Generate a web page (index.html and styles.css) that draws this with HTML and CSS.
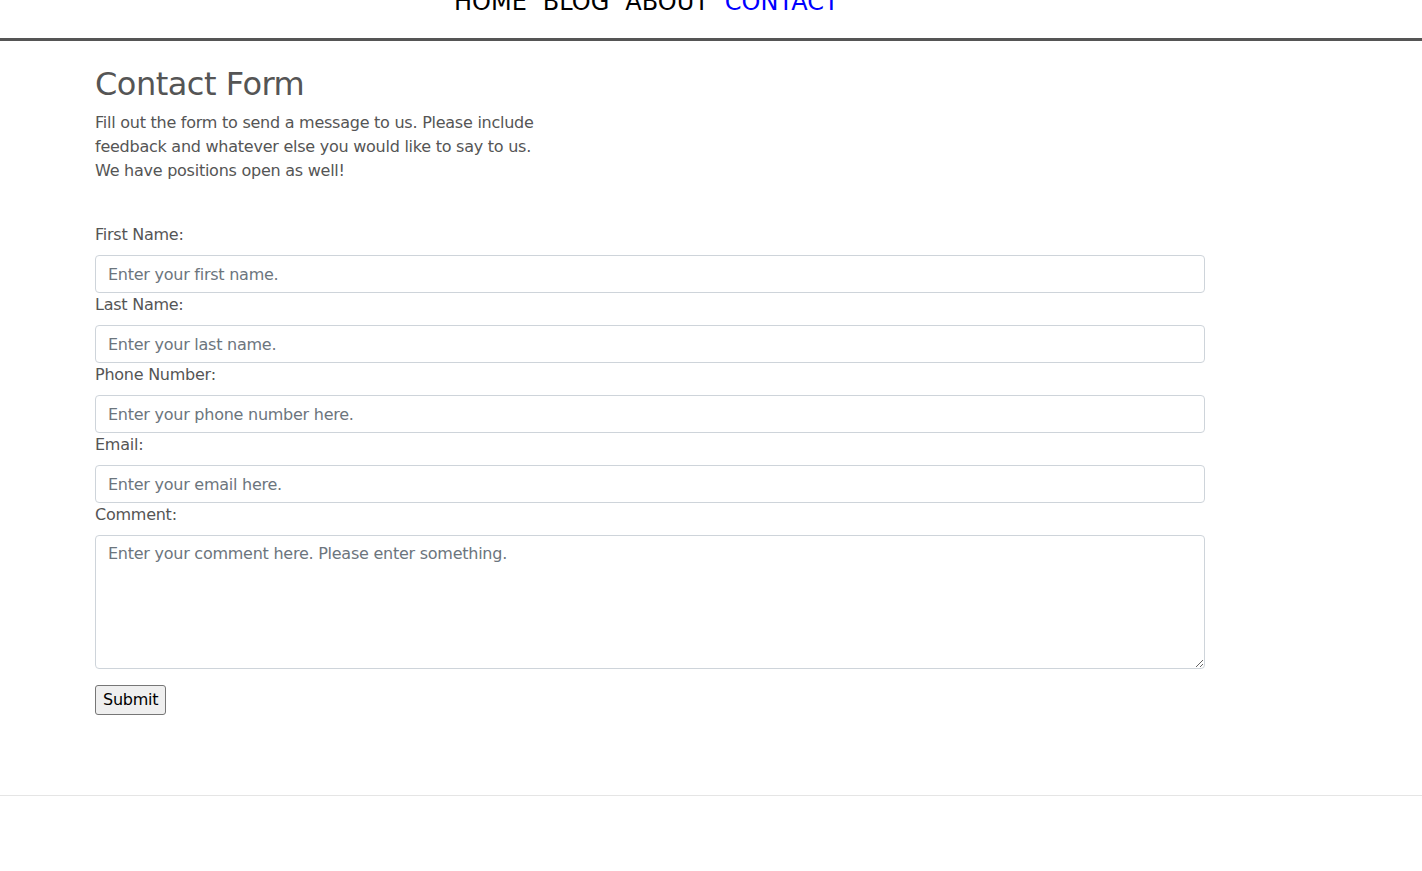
FILE: index.html
```html
<!DOCTYPE html>
<html>
<head>
<meta charset="utf-8">
<title>Contact</title>
<link rel="stylesheet" href="styles.css">
</head>
<body>
<header class="site-header">
  <nav class="nav">
    <a class="nav-link" href="#">HOME</a>
    <a class="nav-link" href="#">BLOG</a>
    <a class="nav-link" href="#">ABOUT</a>
    <a class="nav-link active" href="#">CONTACT</a>
  </nav>
</header>
<main class="content">
  <h1 class="title">Contact Form</h1>
  <p class="intro">Fill out the form to send a message to us. Please include feedback and whatever else you would like to say to us. We have positions open as well!</p>
  <form class="form">
    <label class="label" for="fn">First Name:</label>
    <input class="field" id="fn" type="text" placeholder="Enter your first name.">
    <label class="label" for="ln">Last Name:</label>
    <input class="field" id="ln" type="text" placeholder="Enter your last name.">
    <label class="label" for="ph">Phone Number:</label>
    <input class="field" id="ph" type="text" placeholder="Enter your phone number here.">
    <label class="label" for="em">Email:</label>
    <input class="field" id="em" type="text" placeholder="Enter your email here.">
    <label class="label" for="cm">Comment:</label>
    <textarea class="field area" id="cm" placeholder="Enter your comment here. Please enter something."></textarea>
    <div class="actions"><button class="submit" type="button">Submit</button></div>
  </form>
</main>
<hr class="footer-rule">
</body>
</html>
```
FILE: styles.css
```css
html, body {
  margin: 0;
  padding: 0;
  background: #fff;
}
body {
  font-family: "DejaVu Sans", sans-serif;
  color: #555;
  font-size: 16px;
  line-height: 24px;
  letter-spacing: -0.25px;
}
.site-header {
  height: 38px;
  border-bottom: 3px solid #555;
  overflow: hidden;
}
.nav {
  display: flex;
  gap: 16px;
  margin-top: -10px;
  padding-left: 454px;
  font-size: 24px;
  line-height: 24px;
  letter-spacing: 0;
}
.nav-link {
  color: #000;
  text-decoration: none;
}
.nav-link.active {
  color: #0000ff;
}
.content {
  padding-left: 95px;
  width: 1110px;
}
.title {
  margin: 24px 0 8px;
  font-size: 32px;
  line-height: 38px;
  font-weight: 400;
  letter-spacing: -0.5px;
  color: #555;
}
.intro {
  margin: 0;
  width: 450px;
}
.form {
  display: flex;
  flex-direction: column;
  margin-top: 40px;
}
.label {
  display: block;
  margin-bottom: 8px;
}
.field {
  display: block;
  box-sizing: border-box;
  width: 1110px;
  height: 38px;
  padding: 6px 12px;
  border: 1px solid #ced4da;
  border-radius: 4px;
  font-family: "DejaVu Sans", sans-serif;
  font-size: 16px;
  line-height: 24px;
  letter-spacing: -0.25px;
  color: #495057;
  background: #fff;
  margin: 0;
}
.field::placeholder {
  color: #6c757d;
  opacity: 1;
}
.area {
  height: 134px;
  resize: vertical;
}
.actions {
  margin-top: 16px;
}
.submit {
  font-family: "DejaVu Sans", sans-serif;
  font-size: 16px;
  line-height: 24px;
  letter-spacing: -0.25px;
  color: #000;
  background: #efefef;
  border: 1px solid #767676;
  border-radius: 3px;
  padding: 2px 7px;
  margin: 0;
}
.footer-rule {
  margin: 80px 0 0;
  border: 0;
  border-top: 1px solid #e5e5e5;
  height: 0;
}
```
